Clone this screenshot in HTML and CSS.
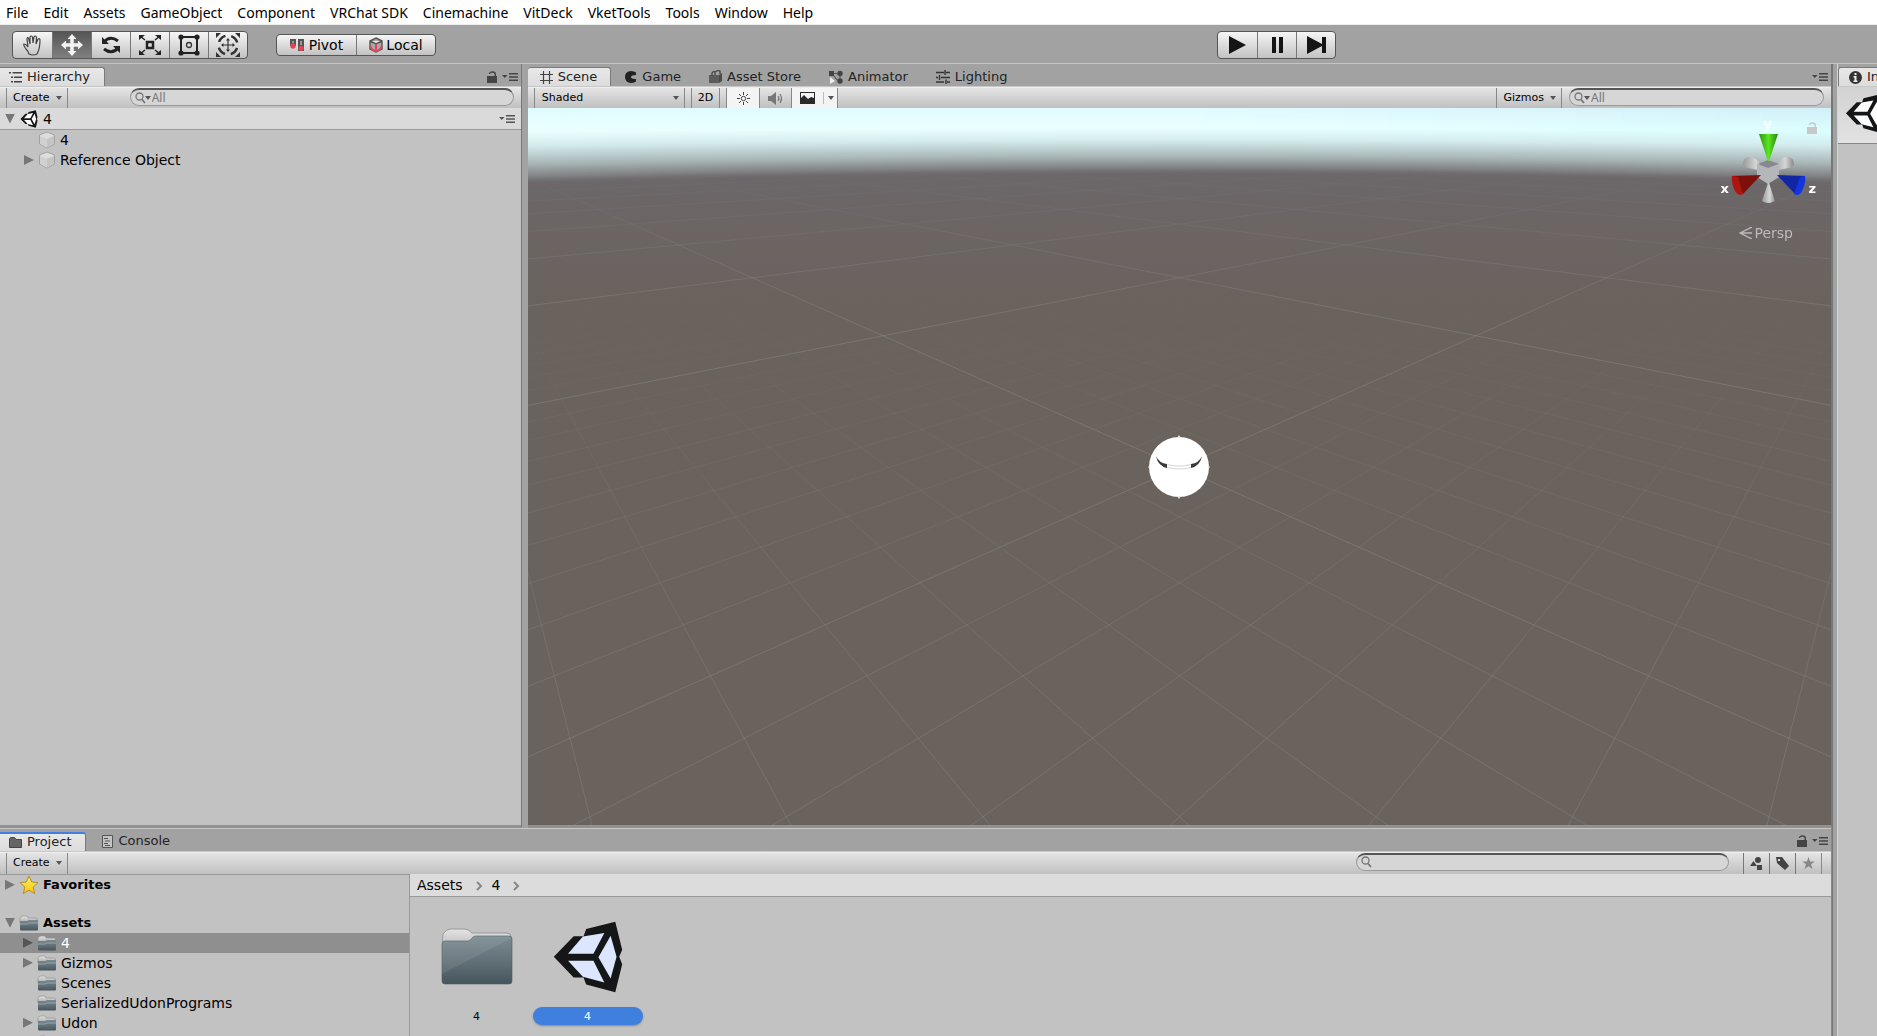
FILE: index.html
```html
<!DOCTYPE html>
<html lang="en">
<head>
<meta charset="utf-8">
<title>Unity Editor</title>
<link rel="stylesheet" href="styles.css">
</head>
<body>
<svg class="defs" aria-hidden="true">
  <defs>
    <linearGradient id="folder-front" x1="0" y1="0" x2="0" y2="1"><stop offset="0" stop-color="#7b8b92"/><stop offset=".6" stop-color="#5e6d73"/><stop offset="1" stop-color="#46555b"/></linearGradient>
    <linearGradient id="folder-back" x1="0" y1="0" x2="0" y2="1"><stop offset="0" stop-color="#e4e4e4"/><stop offset="1" stop-color="#a5a5a5"/></linearGradient>
    <linearGradient id="star-fill" x1="0" y1="0" x2="0" y2="1"><stop offset="0" stop-color="#ffee70"/><stop offset="1" stop-color="#f8c800"/></linearGradient>
    <symbol id="unity" viewBox="455 301 211 218">
      <path fill="#151617" d="M457 409 517 347H547L555 325 643 303 664 388 655 409 664 432 643 517 555 493 547 472H517z"/>
      <path class="unity-face" d="M500 400 545 348 610 337 577 400zM500 421H577L610 487 545 470zM592 411 629 346 647 409 629 475z"/>
    </symbol>
    <symbol id="folder" viewBox="0 0 72 58">
      <path fill="url(#folder-back)" stroke="#999" d="M1.500 12 2 6Q6 1 9 1H24Q27 1 31 5H66Q70 5 70 9V30H2z"/>
      <path fill="url(#folder-front)" stroke="#4d5b60" stroke-width=".6" d="M1 16Q1 13 4 13H27Q29 13 32 9Q33 8 35 8H68Q71 8 71 11V53Q71 56 68 56H4Q1 56 1 53z"/>
      <path fill="#fff" fill-opacity=".08" d="M1 46V16Q1 13 4 13H27L33 8H68L71 10z"/>
    </symbol>
    <symbol id="folder-small" viewBox="0 0 20 16">
      <path fill="url(#folder-back)" stroke="#8a8a8a" stroke-width=".6" d="M1 6V3Q2 1 4 1H7Q9 1 9 3H17Q18.500 3 18.500 5V8H1z"/>
      <path fill="url(#folder-front)" d="M1 6H8L10 5H19V14.500Q19 15.500 18 15.500H2Q1 15.500 1 14.500z"/>
      <path fill="none" stroke="#9fb0b6" stroke-width=".8" d="M1 9H8L10 8H19"/>
    </symbol>
    <symbol id="cube" viewBox="0 0 18 18">
      <path fill="#dedede" stroke="#a2a2a2" d="M9 1 16.500 4V13L9 17 1.500 13V4z"/>
      <path fill="#c4c4c4" d="M9 8 16 5V12.800L9 16.500z"/><path fill="#d0d0d0" d="M2 5 9 8V16.500L2 12.800z"/>
    </symbol>
    <symbol id="lock" viewBox="0 0 10 12"><path d="M0 5H10V12H0z" fill="currentColor"/><path d="M2.500 3Q2.500 1 5.500 1 8.300 1 8.300 3.500V5" fill="none" stroke="currentColor" stroke-width="1.400"/></symbol>
    <symbol id="options" viewBox="0 0 16 8"><path fill="currentColor" d="M0 2H5.500L2.800 5zM7 0H16V1.500H7zM7 3.200H16V4.700H7zM7 6.400H16V7.900H7z"/></symbol>
    <symbol id="lens" viewBox="0 0 14 12"><circle cx="4.500" cy="4.500" r="3.500" fill="none" stroke="#777" stroke-width="1.300"/><path d="M7 7.500 10 11" stroke="#777" stroke-width="1.800"/></symbol>
    <symbol id="down" viewBox="0 0 6 4"><path fill="#555" d="M0 0H6L3 4z"/></symbol>
  </defs>
</svg>

<nav class="menubar">
  <a href="#">File</a><a href="#">Edit</a><a href="#">Assets</a><a href="#">GameObject</a><a href="#">Component</a><a href="#">VRChat SDK</a><a href="#">Cinemachine</a><a href="#">VitDeck</a><a href="#">VketTools</a><a href="#">Tools</a><a href="#">Window</a><a href="#">Help</a>
</nav>

<header class="toolbar">
  <div class="button-group tools">
    <button type="button" aria-label="Hand"><svg width="22" height="22" viewBox="0 0 22 22" fill="none" stroke="#444" stroke-width="1.200"><path d="M7 20Q6 17 4 15 1 11 2 10 4 10 6 13L5 5Q5 3 6.500 4L8 10 8 3Q9 1 10.500 3L11 9 12 3Q13 1 14.500 3L14 10 16 5Q18 4 18 6 18 15 15 20 11 22 7 20z"/></svg></button>
    <button type="button" class="active" aria-label="Move"><svg width="22" height="22" viewBox="0 0 22 22"><path fill="#f2f2f2" d="M11 0 15.500 5H12.800V9.200H17V6.500L22 11 17 15.500V12.800H12.800V17H15.500L11 22 6.500 17H9.200V12.800H5V15.500L0 11 5 6.500V9.200H9.200V5H6.500z"/></svg></button>
    <button type="button" aria-label="Rotate"><svg width="20" height="20" viewBox="0 0 20 20"><g fill="none" stroke="#222" stroke-width="3"><path d="M3 7Q9 0 17 6"/><path d="M17 13Q11 20 3 14"/></g><path fill="#222" d="M1 2V9H8zM19 18V11H12z"/></svg></button>
    <button type="button" aria-label="Scale"><svg width="22" height="20" viewBox="0 0 22 20"><path fill="none" stroke="#222" stroke-width="2.500" d="M8 7H14V13H8z"/><path d="M6 5 1 1M16 5 21 1M6 15 1 19M16 15 21 19" stroke="#222" stroke-width="1.500"/><path fill="#222" d="M0 0H6L0 5zM22 0H16L22 5zM0 20H6L0 15zM22 20H16L22 15z"/></svg></button>
    <button type="button" aria-label="Rect"><svg width="22" height="22" viewBox="0 0 22 22"><path fill="none" stroke="#222" stroke-width="2" d="M3 3H19V19H3z"/><circle cx="11" cy="11" r="2.500" fill="none" stroke="#333" stroke-width="1.300"/><g fill="#222"><circle cx="3" cy="3" r="2.600"/><circle cx="19" cy="3" r="2.600"/><circle cx="3" cy="19" r="2.600"/><circle cx="19" cy="19" r="2.600"/></g></svg></button>
    <button type="button" aria-label="Transform"><svg width="24" height="24" viewBox="0 0 24 24"><g fill="none" stroke="#333"><circle cx="12" cy="12" r="9.500" stroke-width="2.500" stroke-dasharray="9 5.920" stroke-dashoffset="-3"/><path d="M12 7V17M7 12H17" stroke-width="1.200"/></g><path fill="#333" d="M0 0H5L0 5zM24 0H19L24 5zM0 24H5L0 19zM24 24H19L24 19zM12 5 14 7.500H10zM12 19 14 16.500H10zM5 12 7.500 10V14zM19 12 16.500 10V14z"/></svg></button>
  </div>
  <div class="button-group handles">
    <button type="button"><svg width="14" height="12" viewBox="0 0 14 12"><path fill="#555" d="M0 0H6V7H0zM8 0H14V12H8z"/><path fill="#999" d="M2 2H4V4H2zM10 2H12V6H10z"/><circle cx="3" cy="7" r="2.700" fill="#e04858"/><circle cx="11" cy="9.300" r="2.600" fill="#e04858"/></svg>Pivot</button>
    <button type="button"><svg width="14" height="16" viewBox="0 0 14 16"><path fill="#aaa" stroke="#555" stroke-width="1.400" d="M7 1 13 4V12L7 15 1 12V4zM1 4 7 7 13 4M7 7V15"/><path fill="none" stroke="#e04858" stroke-width="1.800" d="M7 7V15M1.500 9Q3 14 7 14 11 14 12.500 9"/></svg>Local</button>
  </div>
  <div class="button-group playback">
    <button type="button" aria-label="Play"><svg width="17" height="18" viewBox="0 0 17 18"><path d="M0 0 17 9 0 18z" fill="#151515"/></svg></button>
    <button type="button" aria-label="Pause"><svg width="11" height="18" viewBox="0 0 11 18"><path d="M0 1H4V17H0zM7 1H11V17H7z" fill="#151515"/></svg></button>
    <button type="button" aria-label="Step"><svg width="19" height="18" viewBox="0 0 19 18"><path d="M0 0 15 8V1H19V17H15V10L0 18z" fill="#151515"/></svg></button>
  </div>
</header>

<main class="workspace">
  <div class="docks">
    <section class="panel hierarchy">
      <div class="tabs">
        <button type="button" class="tab current"><svg width="13" height="11" viewBox="0 0 13 11"><path fill="#444" d="M0 0H2V1.500H0zM3.500 0H13V1.500H3.500zM2 4.500H4V6H2zM5 4.500H13V6H5zM2 9H4V10.500H2zM5 9H13V10.500H5z"/></svg>Hierarchy</button>
        <div class="tab-tools"><svg width="10" height="12"><use href="#lock"/></svg><svg width="16" height="8"><use href="#options"/></svg></div>
      </div>
      <div class="strip">
        <button type="button" class="strip-button">Create<svg width="6" height="4"><use href="#down"/></svg></button>
        <label class="search"><svg width="14" height="12"><use href="#lens"/></svg><svg class="search-arrow" width="6" height="4"><use href="#down"/></svg><input type="text" placeholder="All" aria-label="Search hierarchy"></label>
      </div>
      <div class="scene-row"><span class="arrow open"></span><svg class="logo-small" width="18" height="18"><use href="#unity"/></svg><span>4</span><svg class="row-options" width="16" height="8"><use href="#options"/></svg></div>
      <ul class="tree">
        <li class="nested"><span class="arrow none"></span><svg width="18" height="18"><use href="#cube"/></svg>4</li>
        <li class="nested"><span class="arrow"></span><svg width="18" height="18"><use href="#cube"/></svg>Reference Object</li>
      </ul>
    </section>

    <section class="panel scene">
      <div class="tabs">
        <button type="button" class="tab current"><svg width="13" height="13" viewBox="0 0 13 13"><path fill="none" stroke="#444" d="M3.500 0V13M9.500 0V13M0 3.500H13M0 9.500H13" stroke-width="1.200"/></svg>Scene</button>
        <button type="button" class="tab"><svg width="12" height="12" viewBox="0 0 12 12"><path fill="#222" d="M11 1.500V4Q6 4 6 6 6 8 11 8V10.500Q8 12 6 12 0 11.500 0 6 0 .5 6 0 9 0 11 1.500z"/></svg>Game</button>
        <button type="button" class="tab"><svg width="13" height="13" viewBox="0 0 13 13"><path fill="#5c5c5c" d="M0 5H10V13H0z"/><path fill="#4c4c4c" d="M10 5 13 3V11L10 13z"/><path fill="none" stroke="#444" stroke-width="1.300" d="M3 6V3Q4 1 6 2M6 5V2Q8 0 11 1V4"/></svg>Asset Store</button>
        <button type="button" class="tab"><svg width="14" height="14" viewBox="0 0 14 14"><g fill="#444"><path d="M0 1H5V6H0z"/><circle cx="11" cy="3.500" r="2.700"/><circle cx="11" cy="11" r="2.700"/></g><path d="M5 3.500H9M11 5V9M9 11 5 6" stroke="#555" stroke-width="1.200"/><path d="M1 7 6 11 1 14z" fill="#eee"/></svg>Animator</button>
        <button type="button" class="tab"><svg width="14" height="14" viewBox="0 0 14 14"><path fill="none" stroke="#333" stroke-width="1.400" d="M0 2.500H8M10 2.500H14M9 0V5M0 7.500H2M5 7.500H14M3.500 5V10M0 12H8M11 12H14M10 9.500V14"/></svg>Lighting</button>
        <div class="tab-tools"><svg width="16" height="8"><use href="#options"/></svg></div>
      </div>
      <div class="strip">
        <div class="shading"><select aria-label="Shading mode"><option>Shaded</option></select><svg width="6" height="4"><use href="#down"/></svg></div>
        <button type="button" class="strip-button two-d">2D</button>
        <div class="toggles">
          <button type="button" class="toggle on" aria-label="Lighting"><svg width="13" height="13" viewBox="0 0 13 13" fill="none" stroke="#444"><circle cx="6.500" cy="6.500" r="2.200"/><path d="M6.500 0V3M6.500 10V13M0 6.500H3M10 6.500H13M2 2 4 4M11 2 9 4M2 11 4 9M11 11 9 9"/></svg></button>
          <button type="button" class="toggle" aria-label="Audio"><svg width="16" height="13" viewBox="0 0 16 13"><path fill="#777" d="M0 4H3L8 0V13L3 9H0z"/><path fill="none" stroke="#777" stroke-width="1.200" d="M10 4Q12 6.500 10 9M12 2Q15 6.500 12 11"/></svg></button>
          <button type="button" class="toggle on effects" aria-label="Effects"><svg width="15" height="12" viewBox="0 0 15 12"><path fill="#2a2a2a" d="M0 0H15V12H0z"/><path fill="#f5f5f5" d="M1 1H14V6L11 5 8 7 4 3 1 6z"/></svg><span class="divider"></span><svg width="6" height="4"><use href="#down"/></svg></button>
        </div>
        <button type="button" class="strip-button gizmos">Gizmos<svg width="6" height="4"><use href="#down"/></svg></button>
        <label class="search scene-search"><svg width="14" height="12"><use href="#lens"/></svg><svg class="search-arrow" width="6" height="4"><use href="#down"/></svg><input type="text" placeholder="All" aria-label="Search scene"></label>
      </div>
      <div class="viewport">
        <canvas id="ground"></canvas>
        <svg class="orb" width="62" height="64" viewBox="0 0 62 64"><circle cx="31" cy="32" r="30" fill="#fff"/><path fill="#e8e8e8" d="M29 3 31 0 33 3zM29 61 31 64 33 61zM2 30 0 32 2 34zM60 30 62 32 60 34z"/><path fill="none" stroke="#ddd" stroke-width="4" d="M19 31Q31 34 43 31"/><path fill="none" stroke="#fff" stroke-width="1.500" d="M19 31Q31 34 43 31"/><path fill="#3a3a3a" d="M8 21Q11 28 19 29V33Q10 31 8 21zM54 21Q51 28 43 29V33Q52 31 54 21z"/></svg>
        <svg class="axes" width="92" height="86" viewBox="0 0 92 86">
          <defs>
            <linearGradient id="gy"><stop offset="0" stop-color="#329212"/><stop offset=".5" stop-color="#5ae522"/><stop offset="1" stop-color="#2b8610"/></linearGradient>
            <linearGradient id="gg"><stop offset="0" stop-color="#999"/><stop offset=".6" stop-color="#d6d6d6"/><stop offset="1" stop-color="#888"/></linearGradient>
          </defs>
          <path fill="url(#gg)" d="M20 37Q20 31 26 30L30 30 42 39 40 44 26 41Q21 41 20 37z"/>
          <path fill="url(#gg)" d="M71 37Q71 31 65 30L61 30 49 39 51 44 65 41Q70 41 71 37z"/>
          <path fill="#88898e" d="M35 37 45 33 56 37 45 41z"/><path fill="#b5b6ba" d="M34 37 45 41 56 37V50L45 57 34 50z"/>
          <path fill="url(#gy)" d="M36 7H55L46 34H45z"/>
          <path fill="url(#gg)" d="M45 56 39 74Q45 78 52 74L46 56z"/>
          <path fill="#7d100b" d="M9 49 38 48 20 67z"/><path fill="#ac160e" d="M9 49Q13 49 15 50L20 67Q16 70 12 64 8 56 9 49z"/>
          <path fill="#1226a3" d="M82 49 54 48 72 67z"/><path fill="#1434df" d="M82 49Q78 49 77 50L71 67Q76 70 79 64 83 56 82 49z"/>
        </svg>
        <span class="axis axis-y">y</span><span class="axis axis-x">x</span><span class="axis axis-z">z</span>
        <svg class="view-lock" width="10" height="12"><use href="#lock"/></svg>
        <button type="button" class="persp"><svg width="13" height="12" viewBox="0 0 13 12" fill="none" stroke="#bbb"><path d="M13 0 1 6 13 12M1 6H13" stroke-width="1.300"/></svg>Persp</button>
      </div>
    </section>

    <section class="panel project">
      <div class="tabs">
        <button type="button" class="tab current focused"><svg width="13" height="11" viewBox="0 0 13 11"><path fill="#666" stroke="#444" d="M.5 10.500V2L1.500 .5H5.500L7 2.500H12.500V10.500z"/></svg>Project</button>
        <button type="button" class="tab"><svg width="11" height="13" viewBox="0 0 11 13"><path fill="#c4c4c4" stroke="#555" d="M.5 .5H10.500V12.500H.5z"/><path stroke="#555" d="M2 3.500H6M3 6H8M2 8.500H6M3 10.500H8"/></svg>Console</button>
        <div class="tab-tools"><svg width="10" height="12"><use href="#lock"/></svg><svg width="16" height="8"><use href="#options"/></svg></div>
      </div>
      <div class="strip">
        <button type="button" class="strip-button">Create<svg width="6" height="4"><use href="#down"/></svg></button>
        <label class="search project-search"><svg width="14" height="12"><use href="#lens"/></svg><input type="text" aria-label="Search project"></label>
        <div class="filters">
          <button type="button" aria-label="Search by type"><svg width="13" height="13" viewBox="0 0 13 13" fill="#444"><circle cx="8" cy="3" r="3"/><path d="M0 9 3.500 4 7 9zM7 8H12V13H7z"/></svg></button>
          <button type="button" aria-label="Search by label"><svg width="13" height="13" viewBox="0 0 13 13"><path fill="#444" fill-rule="evenodd" d="M0 0H6L13 9 9 13 1 6zM2 2V4H4V2z"/></svg></button>
          <button type="button" aria-label="Save search"><svg width="13" height="12" viewBox="0 0 24 23" fill="#888"><path d="M12 0 15 8.500H24L17 14 19.500 23 12 17.500 4.500 23 7 14 0 8.500H9z"/></svg></button>
        </div>
      </div>
      <div class="browser">
        <ul class="tree folders">
          <li class="root favorites"><span class="arrow"></span><svg width="20" height="20" viewBox="0 0 20 20"><path fill="url(#star-fill)" stroke="#b08e30" d="M10 1 12.700 7 19 7.600 14.200 12 15.700 18.500 10 15.200 4.300 18.500 5.800 12 1 7.600 7.300 7z"/></svg>Favorites</li>
          <li class="root"><span class="arrow open"></span><svg width="20" height="16"><use href="#folder-small"/></svg>Assets</li>
          <li class="nested selected"><span class="arrow"></span><svg width="20" height="16"><use href="#folder-small"/></svg>4</li>
          <li class="nested"><span class="arrow"></span><svg width="20" height="16"><use href="#folder-small"/></svg>Gizmos</li>
          <li class="nested"><span class="arrow none"></span><svg width="20" height="16"><use href="#folder-small"/></svg>Scenes</li>
          <li class="nested"><span class="arrow none"></span><svg width="20" height="16"><use href="#folder-small"/></svg>SerializedUdonPrograms</li>
          <li class="nested"><span class="arrow"></span><svg width="20" height="16"><use href="#folder-small"/></svg>Udon</li>
          <li class="nested"><span class="arrow none"></span><svg width="20" height="16"><use href="#folder-small"/></svg></li>
        </ul>
        <div class="files">
          <nav class="crumbs"><a href="#">Assets</a><svg width="7" height="10" viewBox="0 0 7 10"><path fill="none" stroke="#888" stroke-width="2" d="M1 1 5 5 1 9"/></svg><a href="#">4</a><svg width="7" height="10" viewBox="0 0 7 10"><path fill="none" stroke="#888" stroke-width="2" d="M1 1 5 5 1 9"/></svg></nav>
          <div class="grid">
            <figure><svg width="72" height="72" viewBox="0 -7 72 72"><use href="#folder" width="72" height="58"/></svg><figcaption>4</figcaption></figure>
            <figure class="chosen"><svg width="72" height="72"><use href="#unity"/></svg><figcaption>4</figcaption></figure>
          </div>
        </div>
      </div>
    </section>
  </div>

  <section class="panel inspector">
    <div class="tabs"><button type="button" class="tab current"><svg width="13" height="13" viewBox="0 0 13 13"><circle cx="6.500" cy="6.500" r="6.500" fill="#333"/><path fill="#eee" d="M5.500 2H7.500V4H5.500zM4.500 5H7.500V9.500H8.500V11H4.500V9.500H5.500V6.500H4.500z"/></svg>Inspector</button></div>
    <div class="asset-header"><svg class="logo-small" width="39" height="39"><use href="#unity"/></svg></div>
  </section>
</main>
<script src="scene.js"></script>
</body>
</html>
```

FILE: styles.css
```css
* { box-sizing: border-box; }
body { margin: 0; height: 100vh; display: flex; flex-direction: column; overflow: hidden; background: #a2a2a2; color: #000; font: 13px/20px "DejaVu Sans", Verdana, sans-serif; }
button, input, select { font: inherit; color: inherit; border: 0; padding: 0; margin: 0; background: none; border-radius: 0; }
a { color: inherit; text-decoration: none; }
ul { list-style: none; margin: 0; padding: 0; }
svg { display: block; flex: none; }
.defs { position: absolute; width: 0; height: 0; }
.unity-face { fill: var(--face, #dce6ff); }
.logo-small { --face: #fff; }

.menubar { flex: none; height: 25px; display: flex; gap: 15px; padding: 0 6px; background: #fff; border-bottom: 1px solid #eee; font: 14px/25px "Noto Sans", "Open Sans", sans-serif; white-space: nowrap; }

.toolbar { flex: none; height: 39px; display: flex; align-items: center; padding: 2px 12px 0; border-bottom: 1px solid #c4c4c4; position: relative; }
.button-group { display: flex; height: 28px; border: 1px solid #555; border-radius: 4px; overflow: hidden; background: linear-gradient(#f6f6f6, #c2c2c2); }
.button-group button { display: flex; align-items: center; justify-content: center; }
.button-group button + button { border-left: 1px solid #777; }
.button-group .active { background: linear-gradient(#555, #808080); }
.tools button { width: 39px; }
.handles { height: 22px; margin-left: 28px; font-size: 14px; }
.handles button { width: 79px; gap: 5px; }
.handles button + button { gap: 3px; }
.playback { position: absolute; left: 65%; margin-left: -3px; }
.playback button { width: 39px; }

.workspace { flex: 1; min-height: 0; display: flex; gap: 4px; }
.docks { flex: 1; min-width: 0; display: grid; grid-template-columns: minmax(0, 2fr) minmax(0, 5fr); grid-template-rows: minmax(0, 11fr) minmax(0, 3fr); column-gap: 6px; border-right: 1px solid #777; }
.panel { display: flex; flex-direction: column; min-width: 0; min-height: 0; background: #c2c2c2; overflow: hidden; }
.hierarchy, .scene { border-right: 1px solid #777; border-bottom: 3px solid #919191; }
.project { grid-column: 1 / 3; border-right: 1px solid #888; }
.inspector { width: 40px; flex: none; border-left: 1px solid #d4d4d4; }

.tabs { flex: none; height: 23px; padding-top: 3px; display: flex; background: #a2a2a2; border-bottom: 1px solid #c8c8c8; }
.project .tabs { height: 24px; border-top: 1px solid #c8c8c8; }
.tab { display: flex; align-items: center; gap: 5px; padding: 0 14px; color: #222; white-space: nowrap; }
.tab.current { background: linear-gradient(#e8e8e8, #dcdcdc); border: 1px solid #7a7a7a; border-bottom: 0; border-left: 0; border-radius: 3px 3px 0 0; }
.scene .tab.current { padding: 0 13px 0 12px; }
.project .tab { padding: 0 16px; }
.hierarchy .tab.current, .project .tab.current { padding: 0 14px 0 9px; border-top-left-radius: 0; }
.project .tab.focused { border-top: 2px solid #3f80e0; }
.tab-tools { margin-left: auto; display: flex; align-items: center; gap: 5px; padding-right: 3px; color: #444; }

.strip { flex: none; height: 21px; display: flex; background: linear-gradient(#e4e4e4, #c0c0c0); border-top: 1px solid #eee; padding: 0 7px 0 6px; font-size: 11px; }
.project .strip { height: 22px; }
.strip-button { display: flex; align-items: center; gap: 6px; padding: 0 5px 0 6px; border: solid #888; border-width: 0 1px; }
.search { margin-left: auto; height: 18px; display: flex; align-items: center; padding: 0 4px; border: 1px solid #999; border-top: 2px solid #555; border-radius: 9px; background: #d6d6d6; color: #777; }
.hierarchy .search { flex: 0 1 384px; }
.search input { flex: 1; min-width: 0; height: 14px; outline: 0; font: 12px/14px "Noto Sans", sans-serif; }
.search input::placeholder { color: #777; opacity: 1; }
.search-arrow { margin-left: -4px; margin-right: 1px; }
.shading { width: 151px; display: flex; align-items: center; padding: 0 5px 0 7px; border: solid #888; border-width: 0 1px; }
.shading select { appearance: none; flex: 1; min-width: 0; }
.two-d { margin-left: 6px; padding: 0 6px; }
.toggles { display: flex; margin-left: 6px; border: solid #888; border-width: 0 1px; }
.toggle { width: 32px; display: flex; align-items: center; justify-content: center; }
.toggle + .toggle { border-left: 1px solid #888; }
.toggle.on { background: #f4f4f4; }
.toggle.effects { width: 46px; gap: 4px; padding-left: 4px; }
.divider { width: 1px; height: 12px; margin-left: 4px; background: #bbb; }
.gizmos { margin-left: auto; }
.scene-search { margin-left: 7px; flex: 0 0 255px; }
.project-search { flex: 0 0 373px; gap: 3px; margin-right: 14px; }
.filters { display: flex; border-right: 1px solid #888; margin-right: 2px; }
.filters button { width: 26px; display: flex; align-items: center; justify-content: center; border-left: 1px solid #777; }

.scene-row { flex: none; height: 22px; display: flex; align-items: center; gap: 5px; padding: 0 6px 0 5px; background: #dadada; border-bottom: 1px solid #999; font-size: 14px; }
.row-options { margin-left: auto; color: #555; }
.tree li { height: 20px; display: flex; align-items: center; gap: 4px; font-size: 14px; line-height: 18px; white-space: nowrap; }
.tree .root { padding-left: 5px; gap: 4px; font-size: 13px; font-weight: bold; }
.tree .nested { padding-left: 24px; }
.folders .nested { padding-left: 23px; }
.tree .selected { background: #8f8f8f; color: #fff; }
.tree .selected .arrow { background: #555; }
.tree .favorites { margin-bottom: 18px; }
.arrow { flex: none; width: 10px; height: 10px; background: #777; clip-path: polygon(0 0, 100% 50%, 0 100%); }
.arrow.open { clip-path: polygon(0 0, 100% 0, 50% 100%); }
.tree .arrow.none { background: none; }

.viewport { flex: 1; min-height: 0; position: relative; overflow: hidden; background: #6a625c; color: #fff; }
#ground { position: absolute; inset: 0; width: 100%; height: 100%; }
.orb { position: absolute; left: 50%; top: 50%; margin: -31px 0 0 -31px; }
.axes { position: absolute; right: 16px; top: 19px; }
.axis { position: absolute; font-weight: bold; font-size: 13px; line-height: 16px; }
.axis-y { right: 59px; top: 8px; }
.axis-x { right: 102px; top: 73px; }
.axis-z { right: 15px; top: 73px; }
.view-lock { position: absolute; right: 14px; top: 14px; color: #c8c8c8; }
.persp { position: absolute; right: 38px; top: 115px; display: flex; align-items: center; gap: 3px; color: #bbb; font-size: 14px; }

.browser { flex: 1; min-height: 0; display: flex; }
.folders { flex: 0 0 410px; border-right: 1px solid #999; border-top: 1px solid #999; overflow: hidden; }
.files { flex: 1; min-width: 0; }
.crumbs { height: 23px; display: flex; align-items: center; padding-left: 7px; background: #dcdcdc; border-bottom: 1px solid #999; font-size: 14px; }
.crumbs svg { margin: 2px 9px 0 13px; }
.grid { display: flex; padding: 24px 0 0 11px; }
figure { margin: 0; width: 111px; display: flex; flex-direction: column; align-items: center; gap: 14px; }
figcaption { width: 110px; height: 18px; border-radius: 9px; text-align: center; font-size: 11px; line-height: 19px; }
.chosen figcaption { background: #3f80df; color: #fff; box-shadow: 0 1px 2px #888; }

.inspector .tab.current { padding: 0 10px; border-left: 1px solid #7a7a7a; }
.asset-header { height: 57px; padding: 7px; background: linear-gradient(#d2d2d2, #e2e2e2); border-bottom: 1px solid #888; }
```

FILE: scene.js
```js
const canvas = document.getElementById('ground');

function drawScene() {
  const w = canvas.clientWidth, h = canvas.clientHeight;
  canvas.width = w;
  canvas.height = h;
  const ctx = canvas.getContext('2d');
  const scale = h / 716;

  ctx.fillStyle = '#6a625c';
  ctx.fillRect(0, 0, w, h);
  const fog = ctx.createLinearGradient(0, 60 * scale, 0, 200 * scale);
  fog.addColorStop(0, '#6c676a');
  fog.addColorStop(1, '#6a625c');
  ctx.fillStyle = fog;
  ctx.fillRect(0, 0, w, 200 * scale);

  // Ground grid seen along its diagonal; (a, b) are cell coordinates.
  const near = 7.888;
  const project = (a, b) => {
    const depth = near - (a + b) / 2;
    return [w / 2 + 763 * scale * ((a - b) / 2) / depth, (20 + 2674 / depth) * scale];
  };
  const strokeLine = (fixed, swap) => {
    const from = -150, to = Math.min(150, 2 * (near - 0.5) - fixed);
    const p = swap ? project(from, fixed) : project(fixed, from);
    const q = swap ? project(to, fixed) : project(fixed, to);
    ctx.beginPath();
    ctx.moveTo(...p);
    ctx.lineTo(...q);
    ctx.stroke();
  };
  const fade = (start, end, alpha) => {
    const g = ctx.createLinearGradient(0, start * scale, 0, end * scale);
    g.addColorStop(0, 'rgba(130,138,138,0)');
    g.addColorStop(1, `rgba(130,138,138,${alpha})`);
    return g;
  };
  const minor = fade(170, 600, 0.42), major = fade(50, 220, 0.5);
  for (let i = -90; i <= 14; i++) {
    ctx.strokeStyle = i % 10 === 0 ? major : minor;
    ctx.lineWidth = 1;
    strokeLine(i, false);
    strokeLine(i, true);
  }

  // Sky, with the horizon dipping towards both sides.
  for (let x = 0; x < w; x += 2) {
    const side = (x - w / 2) / (w / 2);
    const bottom = (67 + 10 * side * side) * scale;
    const sky = ctx.createLinearGradient(0, 0, 0, bottom);
    const tint = Math.max(0, side);
    sky.addColorStop(0, `rgb(${224 - 14 * tint},${252 - 14 * tint},${254 - 6 * tint})`);
    sky.addColorStop(0.3, `rgb(${234 - 14 * tint},255,255)`);
    sky.addColorStop(0.48, '#d4ecee');
    sky.addColorStop(0.72, '#a9b6b7');
    sky.addColorStop(0.9, '#7e7e80');
    sky.addColorStop(1, 'rgba(108,103,106,0)');
    ctx.fillStyle = sky;
    ctx.fillRect(x, 0, 2, bottom);
  }
}

new ResizeObserver(drawScene).observe(canvas);
drawScene();
```
